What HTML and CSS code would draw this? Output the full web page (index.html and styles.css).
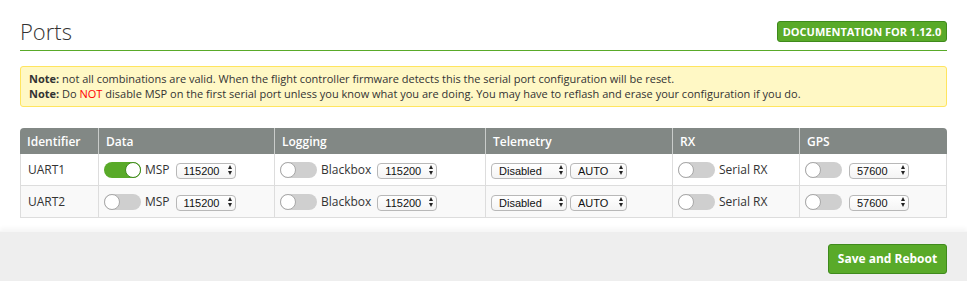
FILE: index.html
```html
<!DOCTYPE html>
<html lang="en">
<head>
<meta charset="UTF-8" />
<title>Ports</title>
<link rel="stylesheet" href="styles.css">
</head>
<body>
  <div class="tab">
    <div class="tab-title">
      <h1>Ports</h1>
      <a class="btn doc-btn" href="#">Documentation for 1.12.0</a>
    </div>

    <div class="note">
      <p><b>Note:</b> not all combinations are valid. When the flight controller firmware detects this the serial port configuration will be reset.</p>
      <p><b>Note:</b> Do <span class="warn">NOT</span> disable MSP on the first serial port unless you know what you are doing. You may have to reflash and erase your configuration if you do.</p>
    </div>

    <table class="ports">
      <thead>
        <tr>
          <th class="col-id">Identifier</th>
          <th class="col-data">Data</th>
          <th class="col-log">Logging</th>
          <th class="col-tel">Telemetry</th>
          <th class="col-rx">RX</th>
          <th class="col-gps">GPS</th>
        </tr>
      </thead>
      <tbody>
        <tr>
          <td>UART1</td>
          <td><div class="cell"><span class="toggle on"></span><span>MSP</span><span class="select w60"><select><option>115200</option></select></span></div></td>
          <td><div class="cell"><span class="toggle"></span><span>Blackbox</span><span class="select w60"><select><option>115200</option></select></span></div></td>
          <td><div class="cell tight"><span class="select w76"><select><option>Disabled</option></select></span><span class="select w57"><select><option>AUTO</option></select></span></div></td>
          <td><div class="cell"><span class="toggle"></span><span>Serial RX</span></div></td>
          <td><div class="cell wide"><span class="toggle"></span><span class="select w60"><select><option>57600</option></select></span></div></td>
        </tr>
        <tr>
          <td>UART2</td>
          <td><div class="cell"><span class="toggle"></span><span>MSP</span><span class="select w60"><select><option>115200</option></select></span></div></td>
          <td><div class="cell"><span class="toggle"></span><span>Blackbox</span><span class="select w60"><select><option>115200</option></select></span></div></td>
          <td><div class="cell tight"><span class="select w76"><select><option>Disabled</option></select></span><span class="select w57"><select><option>AUTO</option></select></span></div></td>
          <td><div class="cell"><span class="toggle"></span><span>Serial RX</span></div></td>
          <td><div class="cell wide"><span class="toggle"></span><span class="select w60"><select><option>57600</option></select></span></div></td>
        </tr>
      </tbody>
    </table>
  </div>

  <div class="content-toolbar">
    <a class="btn save-btn" href="#">Save and Reboot</a>
  </div>
</body>
</html>
```

FILE: styles.css
```css
:root {
  --green: #59aa29;
  --green-dark: #3f8a1c;
  --text: #333;
  --head: #828885;
  --line: #dddddd;
}
html, body {
  margin: 0;
  height: 100%;
  font-family: 'Open Sans', sans-serif;
  color: var(--text);
  background: #fff;
}
body {
  display: flex;
  flex-direction: column;
}
.tab {
  padding: 0 20px 13px 20px;
}
.tab-title {
  display: flex;
  align-items: center;
  justify-content: space-between;
  padding: 16px 0 4px 0;
  border-bottom: 1px solid var(--green);
}
h1 {
  margin: 0;
  font-size: 22px;
  font-weight: 300;
  line-height: 30px;
  color: #333;
}
.btn {
  display: inline-block;
  background: var(--green);
  border: 1px solid var(--green-dark);
  border-radius: 3px;
  color: #fff;
  font-weight: 700;
  text-decoration: none;
  box-sizing: border-box;
  text-align: center;
}
.doc-btn {
  width: 170px;
  height: 21px;
  line-height: 19px;
  font-size: 11px;
  text-transform: uppercase;
}
.note {
  margin-top: 15px;
  background: #fff8c5;
  border: 1px solid #ffe55f;
  border-radius: 3px;
  padding: 4px 8px 5px 8px;
  font-size: 11px;
  line-height: 15px;
}
.note p {
  margin: 0;
}
.note b {
  font-weight: 700;
}
.warn {
  color: #ff0000;
}
.ports {
  margin-top: 21px;
  width: 100%;
  border-collapse: separate;
  border-spacing: 0;
  font-size: 12px;
}
.ports th {
  background: var(--head);
  color: #fff;
  font-weight: 600;
  text-align: left;
  height: 26px;
  padding: 0 7px;
  box-sizing: border-box;
  border-left: 1px solid #c9ccca;
}
.ports th:first-child {
  border-left: none;
  border-top-left-radius: 4px;
}
.ports th:last-child {
  border-top-right-radius: 4px;
}
.col-id { width: 78px; }
.col-data { width: 176px; }
.col-log { width: 211px; }
.col-tel { width: 187px; }
.col-rx { width: 127px; }
.ports td {
  height: 32px;
  padding: 0 5px;
  box-sizing: border-box;
  border-left: 1px solid var(--line);
  border-bottom: 1px solid var(--line);
}
.ports td:first-child {
  padding-left: 7px;
}
.ports td:last-child {
  border-right: 1px solid var(--line);
}
.ports tbody tr:nth-child(2) td {
  background: #f9f9f9;
}
.cell {
  display: flex;
  align-items: center;
  gap: 4px;
}
.cell.tight {
  gap: 3px;
}
.cell.wide {
  gap: 7px;
}
.cell .select {
  margin-left: 2px;
}
.cell.tight .select,
.cell.wide .select {
  margin-left: 0;
}
.toggle {
  position: relative;
  display: inline-block;
  width: 37px;
  height: 16px;
  border-radius: 8px;
  background: #cfcfcf;
  flex: none;
}
.toggle::after {
  content: '';
  position: absolute;
  left: 0;
  top: 0;
  width: 14px;
  height: 14px;
  border-radius: 50%;
  background: #fff;
  border: 1px solid #a8a8a8;
}
.toggle.on {
  background: var(--green);
}
.toggle.on::after {
  left: auto;
  right: 0;
  border-color: #3f8a1c;
}
.select {
  position: relative;
  display: inline-block;
  height: 16px;
  flex: none;
}
.select select {
  -webkit-appearance: none;
  appearance: none;
  width: 100%;
  height: 16px;
  margin: 0;
  padding: 0 0 0 7px;
  border: 1px solid #b8b8b8;
  border-radius: 4px;
  background: linear-gradient(#ffffff, #f4f4f4);
  font-family: 'Liberation Sans', Arial, sans-serif;
  font-size: 11px;
  line-height: 14px;
  color: #111;
  box-sizing: border-box;
}
/* up / down arrows of the dropdown */
.select::before,
.select::after {
  content: '';
  position: absolute;
  right: 4px;
  width: 0;
  height: 0;
  border-left: 2.5px solid transparent;
  border-right: 2.5px solid transparent;
  pointer-events: none;
}
.select::before {
  top: 3px;
  border-bottom: 4px solid #222;
}
.select::after {
  top: 9px;
  border-top: 4px solid #222;
}
.w60 { width: 60px; }
.w76 { width: 76px; }
.w57 { width: 57px; }
.content-toolbar {
  flex: 1;
  display: flex;
  justify-content: flex-end;
  align-items: flex-start;
  padding: 12px 20px 0 0;
  background: #eeeeee;
  border-top: 1px solid #f6f6f6;
  box-shadow: 0 -3px 4px rgba(0, 0, 0, 0.04);
}
.save-btn {
  width: 119px;
  height: 30px;
  line-height: 28px;
  font-size: 12px;
}
```
